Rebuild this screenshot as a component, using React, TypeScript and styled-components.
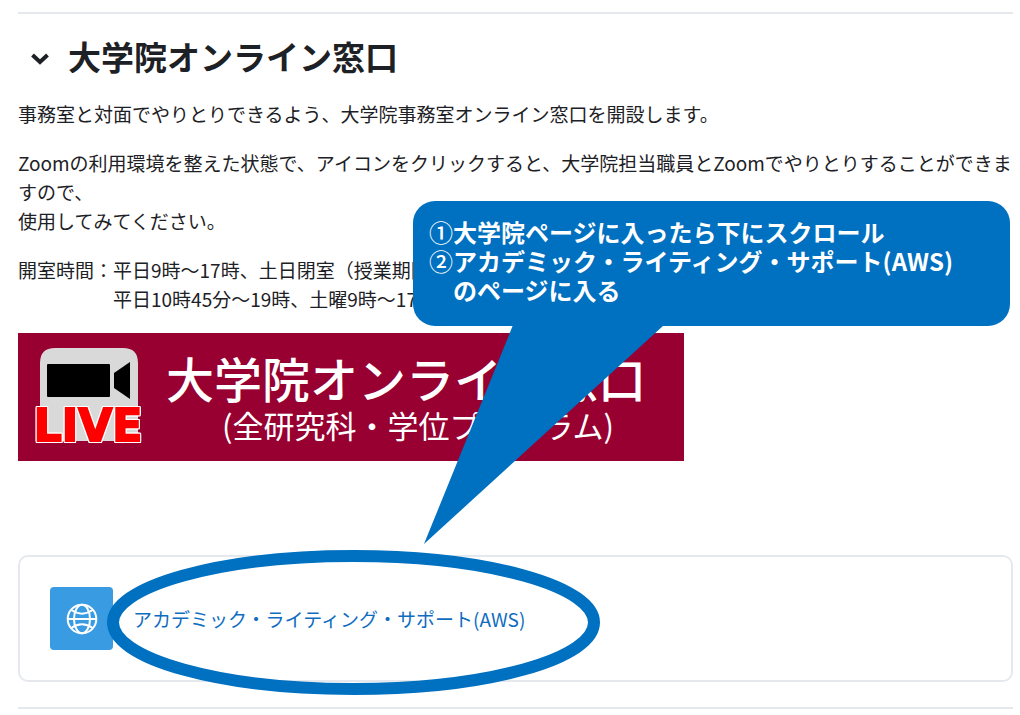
import React from "react";
import styled, { createGlobalStyle } from "styled-components";

const GlobalStyle = createGlobalStyle`
  *, *::before, *::after { box-sizing: border-box; }
  body {
    margin: 0;
    background: #fff;
    color: #1d2125;
    font-family: "Noto Sans CJK JP", "Noto Sans", sans-serif;
    font-size: 19px;
    line-height: 29px;
  }
`;

const Page = styled.main`
  position: relative;
  padding: 12px 7px 0 18px;
`;

const Divider = styled.hr`
  height: 2px;
  margin: 0;
  border: 0;
  background: #e5e9ed;
`;

const SectionHeader = styled.header`
  display: flex;
  align-items: center;
  gap: 17px;
  padding: 18px 0 19px 12px;
`;

const ToggleButton = styled.button`
  display: flex;
  width: 21px;
  height: 21px;
  padding: 0;
  border: 0;
  background: none;
  color: #1d2125;
`;

const SectionTitle = styled.h2`
  margin: 0;
  font-size: 33px;
  line-height: 48px;
  font-weight: 700;
`;

const Description = styled.div`
  display: flex;
  flex-direction: column;
  gap: 20px;
`;

const Paragraph = styled.p`
  margin: 0;
`;

const HoursList = styled.dl`
  display: grid;
  grid-template-columns: max-content 1fr;
  margin: 0;
`;

const HoursLabel = styled.dt`
  grid-row: span 2;
`;

const HoursValue = styled.dd`
  margin: 0;
`;

const Banner = styled.a`
  display: flex;
  gap: 18px;
  width: 666px;
  max-width: 100%;
  height: 128px;
  margin-top: 20px;
  padding: 12px 12px 0 12px;
  background: #970030;
  color: #fff;
  text-decoration: none;
  white-space: nowrap;
`;

const BannerText = styled.span`
  display: flex;
  flex-direction: column;
  align-items: center;
`;

const BannerTitle = styled.span`
  font-size: 48px;
  line-height: 64px;
  font-weight: 500;
`;

const BannerSubtitle = styled.span`
  padding-left: 24px;
  font-size: 31px;
  line-height: 32px;
`;

const LiveLabel = styled.text`
  font-family: "DejaVu Sans", sans-serif;
  font-size: 44px;
  font-weight: 700;
  fill: #f00;
  stroke: #f00;
  stroke-width: 2px;
  filter: drop-shadow(1px 0 0 #fff) drop-shadow(-1px 0 0 #fff) drop-shadow(0 1px 0 #fff) drop-shadow(0 -1px 0 #fff);
`;

const ActivityCard = styled.section`
  position: relative;
  display: flex;
  align-items: center;
  gap: 20px;
  margin: 94px 0 25px;
  padding: 30px;
  border: 2px solid #e5e9ed;
  border-radius: 10px;
`;

const ActivityIcon = styled.span`
  display: flex;
  align-items: center;
  justify-content: center;
  width: 63px;
  height: 63px;
  border-radius: 4px;
  background: #399be2;
`;

const ActivityLink = styled.a`
  color: #0f6cbf;
  text-decoration: none;
`;

const Highlight = styled.svg`
  position: absolute;
  left: 87px;
  top: -7px;
  pointer-events: none;
`;

const Callout = styled.aside`
  position: absolute;
  top: 201px;
  left: 413px;
  right: 10px;
  padding: 16px 16px 22px;
  border-radius: 22px;
  background: #0070c0;
  color: #fff;
  font-size: 24px;
  font-weight: 700;
`;

const StepList = styled.ol`
  margin: 0;
  padding: 0;
  list-style: none;
`;

const Step = styled.li`
  display: grid;
  grid-template-columns: 24px 1fr;
`;

const StepNumber = styled.span`
  font-weight: 500;
`;

const CalloutTail = styled.svg`
  position: absolute;
  left: 11px;
  top: 124px;
  pointer-events: none;
`;

function LiveCamera() {
  return (
    <svg width="118" height="106" viewBox="0 0 118 106" overflow="visible" role="img" aria-label="LIVE">
      <path d="M10 18 Q10 3 25 3 H93 Q108 3 108 18 V96 H10 Z" fill="#d9d9d9" />
      <rect x="17" y="19" width="63" height="33" rx="1" fill="#000" />
      <path d="M84 28 L100 17 V54 L84 43 Z" fill="#000" />
      <LiveLabel x="58" y="96" textAnchor="middle">
        LIVE
      </LiveLabel>
    </svg>
  );
}

function Globe() {
  return (
    <svg width="32" height="32" viewBox="0 0 32 32" fill="none" stroke="#fff" strokeWidth="2" aria-hidden="true">
      <circle cx="16" cy="16" r="14.3" />
      <ellipse cx="16" cy="16" rx="8" ry="14.3" />
      <path d="M1.5 16 H30.5 M5 6.8 Q16 14.5 27 6.8 M5 25.2 Q16 17.5 27 25.2" />
    </svg>
  );
}

export default function App() {
  return (
    <>
      <GlobalStyle />
      <Page>
        <Divider />
        <SectionHeader>
          <ToggleButton type="button" aria-label="折りたたむ" aria-expanded="true">
            <svg width="21" height="21" viewBox="0 0 21 21" fill="none" stroke="currentColor" strokeWidth="4">
              <path d="M2.5 9 L10 16 L17.5 9" />
            </svg>
          </ToggleButton>
          <SectionTitle>大学院オンライン窓口</SectionTitle>
        </SectionHeader>
        <Description>
          <Paragraph>事務室と対面でやりとりできるよう、大学院事務室オンライン窓口を開設します。</Paragraph>
          <Paragraph>
            Zoomの利用環境を整えた状態で、アイコンをクリックすると、大学院担当職員とZoomでやりとりすることができますので、
            <br />
            使用してみてください。
          </Paragraph>
          <HoursList>
            <HoursLabel>開室時間：</HoursLabel>
            <HoursValue>平日9時～17時、土日閉室（授業期間</HoursValue>
            <HoursValue>平日10時45分～19時、土曜9時～17時</HoursValue>
          </HoursList>
        </Description>
        <Banner href="#online">
          <LiveCamera />
          <BannerText>
            <BannerTitle>大学院オンライン窓口</BannerTitle>
            <BannerSubtitle>(全研究科・学位プログラム)</BannerSubtitle>
          </BannerText>
        </Banner>
        <ActivityCard>
          <ActivityIcon>
            <Globe />
          </ActivityIcon>
          <ActivityLink href="#aws">アカデミック・ライティング・サポート(AWS)</ActivityLink>
          <Highlight width="494" height="145" viewBox="0 0 494 145" fill="none" aria-hidden="true">
            <ellipse cx="246.5" cy="72.5" rx="240.5" ry="66.5" stroke="#0070c0" strokeWidth="12" />
          </Highlight>
        </ActivityCard>
        <Divider />
        <Callout>
          <StepList>
            <Step>
              <StepNumber>①</StepNumber>
              <span>大学院ページに入ったら下にスクロール</span>
            </Step>
            <Step>
              <StepNumber>②</StepNumber>
              <span>
                アカデミック・ライティング・サポート(AWS)
                <br />
                のページに入る
              </span>
            </Step>
          </StepList>
          <CalloutTail width="240" height="220" viewBox="0 0 240 220" aria-hidden="true">
            <path d="M89 0 H240 L0 219 Z" fill="#0070c0" />
          </CalloutTail>
        </Callout>
      </Page>
    </>
  );
}
